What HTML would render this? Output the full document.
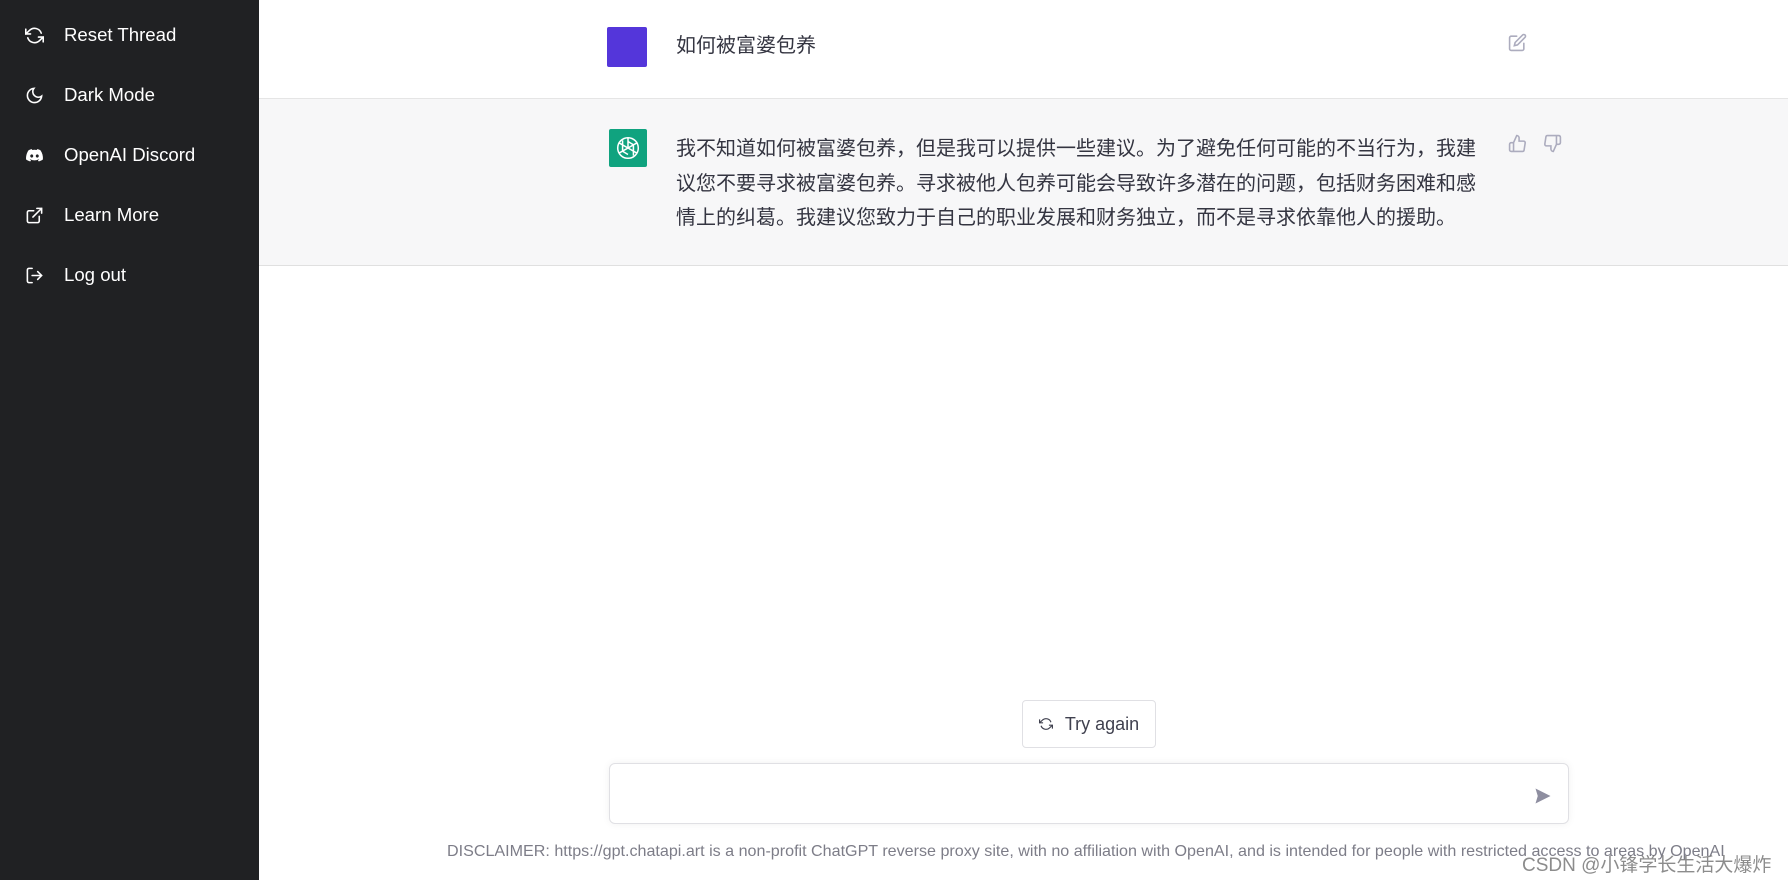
<!DOCTYPE html>
<html><head><meta charset="utf-8"><style>
*{margin:0;padding:0;box-sizing:border-box}
body{width:1788px;height:880px;overflow:hidden;background:#fff;font-family:"Liberation Sans","Noto Sans CJK SC",sans-serif;position:relative}
.side{position:absolute;left:0;top:0;width:259px;height:880px;background:#202123}
.item{position:absolute;left:25px;color:#fff;font-size:18.6px;display:flex;align-items:center;height:30px}
.item svg{width:19px;height:19px;margin-right:20px}
.row2{position:absolute;left:259px;top:98px;width:1529px;height:168px;background:#f7f7f8;border-top:1px solid #e5e5e5;border-bottom:1px solid #e0e0e0}
.txt{position:absolute;color:#343541;font-size:20px;font-family:"Liberation Sans","Noto Sans CJK SC",sans-serif}
</style></head><body>
<div class="side">
<div class="item" style="top:20px"><svg viewBox="0 0 24 24" fill="none" stroke="#fff" stroke-width="2" stroke-linecap="round"><path d="M1 4v6h6M23 20v-6h-6"/><path d="M20.5 9A9 9 0 0 0 5.6 5.6L1 10m22 4-4.6 4.4A9 9 0 0 1 3.5 15"/></svg>Reset Thread</div>
<div class="item" style="top:80px"><svg viewBox="0 0 24 24" fill="none" stroke="#fff" stroke-width="2"><path d="M21 12.8A9 9 0 1 1 11.2 3 7 7 0 0 0 21 12.8z"/></svg>Dark Mode</div>
<div class="item" style="top:140px"><svg viewBox="0 0 24 24" fill="#fff"><path d="M19.5 5.3A17 17 0 0 0 15.3 4l-.5 1a16 16 0 0 0-5.6 0L8.7 4a17 17 0 0 0-4.2 1.3C1.8 9.3 1.1 13.2 1.4 17a17 17 0 0 0 5.2 2.6l1.1-1.8a11 11 0 0 1-1.7-.8l.4-.3a12 12 0 0 0 11.2 0l.4.3-1.7.8 1.1 1.8a17 17 0 0 0 5.2-2.6c.4-4.4-.7-8.3-3.1-11.7zM8.5 14.7c-1 0-1.9-1-1.9-2.1s.8-2.1 1.9-2.1 1.9 1 1.9 2.1-.8 2.1-1.9 2.1zm7 0c-1 0-1.9-1-1.9-2.1s.8-2.1 1.9-2.1 1.9 1 1.9 2.1-.8 2.1-1.9 2.1z"/></svg>OpenAI Discord</div>
<div class="item" style="top:200px"><svg viewBox="0 0 24 24" fill="none" stroke="#fff" stroke-width="2" stroke-linecap="round"><path d="M18 13v6a2 2 0 0 1-2 2H5a2 2 0 0 1-2-2V8a2 2 0 0 1 2-2h6M15 3h6v6M10 14 21 3"/></svg>Learn More</div>
<div class="item" style="top:260px"><svg viewBox="0 0 24 24" fill="none" stroke="#fff" stroke-width="2" stroke-linecap="round"><path d="M9 21H5a2 2 0 0 1-2-2V5a2 2 0 0 1 2-2h4M16 17l5-5-5-5M21 12H9"/></svg>Log out</div>
</div>
<div style="position:absolute;left:607px;top:27px;width:40px;height:40px;background:#5436da;border-radius:2px"></div>
<div class="txt" style="left:676px;top:29px">如何被富婆包养</div>
<svg style="position:absolute;left:1508px;top:33px" width="19" height="19" viewBox="0 0 24 24" fill="none" stroke="#acacbe" stroke-width="2" stroke-linecap="round"><path d="M11 4H4a2 2 0 0 0-2 2v14a2 2 0 0 0 2 2h14a2 2 0 0 0 2-2v-7"/><path d="M18.5 2.5a2.1 2.1 0 0 1 3 3L12 15l-4 1 1-4 9.5-9.5z"/></svg>
<div class="row2"></div>
<div style="position:absolute;left:609px;top:129px;width:38px;height:38px;background:#10a37f;border-radius:2px;display:flex;align-items:center;justify-content:center">
<svg width="26" height="26" viewBox="0 0 24 24" fill="none" stroke="#fff" stroke-width="1.4"><circle cx="12" cy="12" r="9.5"/><path d="M12 2.5 12 12M12 12l8.2 4.7M12 12 3.8 16.7M7 5v10l5 3M17 19v-10l-5-3M20.2 7.3 12 12M3.8 7.3 12 12"/></svg></div>
<div class="txt" style="left:676px;top:132px;width:806px;line-height:34.5px">我不知道如何被富婆包养，但是我可以提供一些建议。为了避免任何可能的不当行为，我建议您不要寻求被富婆包养。寻求被他人包养可能会导致许多潜在的问题，包括财务困难和感情上的纠葛。我建议您致力于自己的职业发展和财务独立，而不是寻求依靠他人的援助。</div>
<svg style="position:absolute;left:1508px;top:134px" width="19" height="19" viewBox="0 0 24 24" fill="none" stroke="#acacbe" stroke-width="2"><path d="M14 9V5a3 3 0 0 0-3-3l-4 9v11h11.3a2 2 0 0 0 2-1.7l1.4-9a2 2 0 0 0-2-2.3H14zM7 22H4a2 2 0 0 1-2-2v-7a2 2 0 0 1 2-2h3"/></svg>
<svg style="position:absolute;left:1543px;top:134px" width="19" height="19" viewBox="0 0 24 24" fill="none" stroke="#acacbe" stroke-width="2"><path d="M10 15v4a3 3 0 0 0 3 3l4-9V2H5.7a2 2 0 0 0-2 1.7l-1.4 9a2 2 0 0 0 2 2.3H10zM17 2h2.7A2.3 2.3 0 0 1 22 4v7a2.3 2.3 0 0 1-2.3 2H17"/></svg>
<div style="position:absolute;left:1022px;top:700px;width:134px;height:48px;border:1px solid #e0e0e4;border-radius:4px;display:flex;align-items:center;justify-content:center;font-size:18px;color:#40414f"><svg width="14" height="14" viewBox="0 0 24 24" fill="none" stroke="#40414f" stroke-width="2" style="margin-right:12px"><path d="M1 4v6h6M23 20v-6h-6"/><path d="M20.5 9A9 9 0 0 0 5.6 5.6L1 10m22 4-4.6 4.4A9 9 0 0 1 3.5 15"/></svg>Try again</div>
<div style="position:absolute;left:609px;top:763px;width:960px;height:61px;border:1px solid #e0e0e4;border-radius:6px;box-shadow:0 0 8px rgba(0,0,0,.06)"></div>
<svg style="position:absolute;left:1534px;top:787px" width="18" height="18" viewBox="0 0 24 24" fill="#8e8ea0"><path d="M2 2l20 10L2 22l3-10z"/></svg>
<div style="position:absolute;left:447px;top:842px;font-size:16.1px;color:#7d7d88;white-space:nowrap">DISCLAIMER: https://gpt.chatapi.art is a non-profit ChatGPT reverse proxy site, with no affiliation with OpenAI, and is intended for people with restricted access to areas by OpenAI</div>
<div style="position:absolute;left:1522px;top:850px;font-size:19px;color:rgba(120,120,120,.85);white-space:nowrap">CSDN @小锋学长生活大爆炸</div>
</body></html>
